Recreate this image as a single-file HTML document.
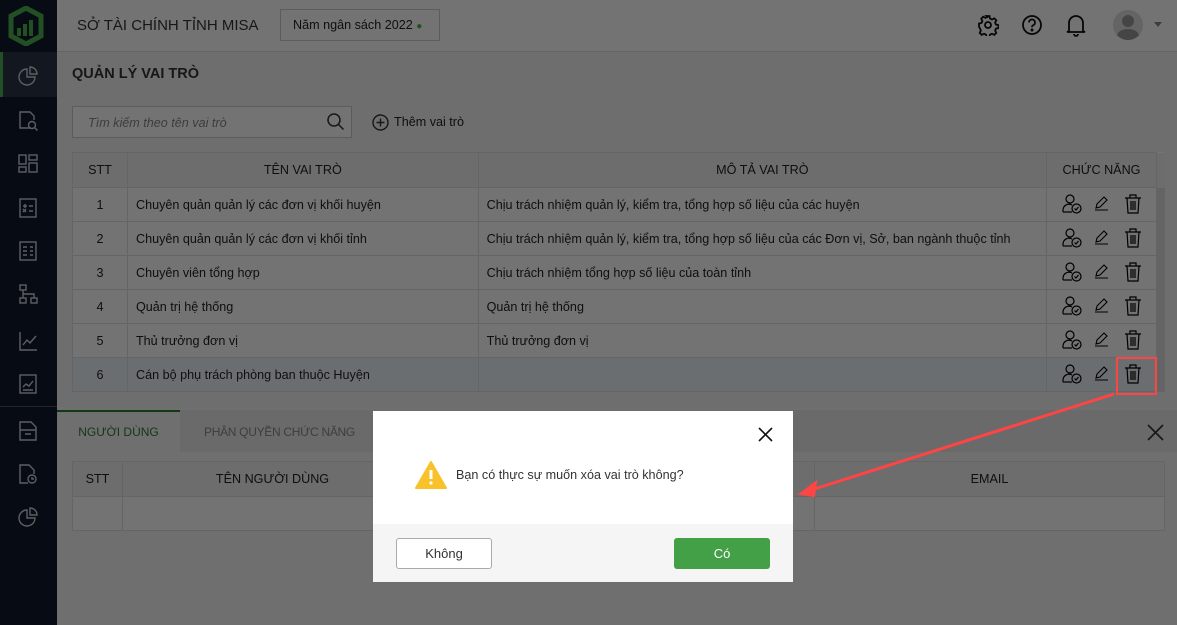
<!DOCTYPE html>
<html><head><meta charset="utf-8"><style>
*{box-sizing:border-box;margin:0;padding:0}
body{width:1177px;height:625px;overflow:hidden;font-family:"Liberation Sans",sans-serif;font-size:12.6px;color:#222;position:relative;background:#f3f3f3}
.side{position:absolute;left:0;top:0;width:57px;height:625px;background:#0f1a2e}
.side .act{position:absolute;left:0;top:52px;width:57px;height:45px;background:#2b3648;border-left:3px solid #4caf50}
.ic{position:absolute;left:17px;width:22px;height:22px}
.top{position:absolute;left:57px;top:0;right:0;height:52px;background:#fff;border-bottom:1px solid #ddd}
.abs{position:absolute}
table{border-collapse:collapse;position:absolute;background:#fff}
td,th{border:1px solid #e0e0e0;height:34px;padding:0 8px;font-weight:normal;font-size:12.6px}
th{background:#f1f1f1;height:35px}
.ov{position:absolute;left:0;top:0;width:1177px;height:625px;background:rgba(0,0,0,.55)}
.dlg{position:absolute;left:373px;top:411px;width:420px;height:171px;background:#fff}
.btn{position:absolute;top:127px;width:96px;height:31px;border-radius:3px;font-size:13px;text-align:center;line-height:30px}
</style></head><body>
<div class="side">
<svg class="abs" style="left:8px;top:6px" width="36" height="40" viewBox="0 0 36 40"><path d="M18 2 L33 10 V30 L18 38 L3 30 V10 Z" fill="none" stroke="#4caf50" stroke-width="5"/><path d="M11 30V22M17 30V18M23 30V14" stroke="#4caf50" stroke-width="4"/></svg>
<div class="act"></div>
<svg class="ic" style="top:65px" viewBox="0 0 22 22" fill="none" stroke="#cfd3d8" stroke-width="1.4"><path d="M10 4a8 8 0 1 0 8 8h-8z"/><path d="M13 2a7 7 0 0 1 7 7h-7z"/></svg>
<svg class="ic" style="top:110px" viewBox="0 0 22 22" fill="none" stroke="#cfd3d8" stroke-width="1.4"><path d="M14 18H3V2h10l4 4v4"/><circle cx="15" cy="15" r="3.5"/><path d="M17.5 17.5l3 3"/></svg>
<svg class="ic" style="top:153px" viewBox="0 0 22 22" fill="none" stroke="#cfd3d8" stroke-width="1.4"><rect x="2" y="2" width="7" height="9"/><rect x="12" y="2" width="8" height="5"/><rect x="2" y="14" width="7" height="5"/><rect x="12" y="10" width="8" height="9"/></svg>
<svg class="ic" style="top:197px" viewBox="0 0 22 22" fill="none" stroke="#cfd3d8" stroke-width="1.4"><rect x="3" y="2" width="16" height="18"/><path d="M6 9h4M8 7v4M12 9h4M6 15l3-3M6 12l3 3M12 14h4"/></svg>
<svg class="ic" style="top:240px" viewBox="0 0 22 22" fill="none" stroke="#cfd3d8" stroke-width="1.4"><rect x="3" y="2" width="16" height="18"/><path d="M6 7h4M6 11h4M6 15h4M13 7h3M13 11h3M13 15h3"/></svg>
<svg class="ic" style="top:283px" viewBox="0 0 22 22" fill="none" stroke="#cfd3d8" stroke-width="1.4"><rect x="3" y="2" width="6" height="5"/><rect x="3" y="15" width="6" height="5"/><rect x="14" y="15" width="6" height="5"/><path d="M6 7v8M6 11h11v4"/></svg>
<svg class="ic" style="top:330px" viewBox="0 0 22 22" fill="none" stroke="#cfd3d8" stroke-width="1.4"><path d="M3 2v18h17"/><path d="M6 15l4-5 3 3 6-7"/></svg>
<svg class="ic" style="top:373px" viewBox="0 0 22 22" fill="none" stroke="#cfd3d8" stroke-width="1.4"><rect x="3" y="2" width="16" height="18"/><path d="M6 14l3-3 3 2 4-5M6 17h10"/></svg>
<div class="abs" style="left:0;top:406px;width:57px;height:1px;background:#555"></div>
<svg class="ic" style="top:420px" viewBox="0 0 22 22" fill="none" stroke="#cfd3d8" stroke-width="1.4"><path d="M3 2h11l5 5v13H3z"/><path d="M3 10h16M8 14h6"/></svg>
<svg class="ic" style="top:463px" viewBox="0 0 22 22" fill="none" stroke="#cfd3d8" stroke-width="1.4"><path d="M11 20H3V2h9l5 5v4"/><circle cx="15" cy="16" r="4"/><path d="M15 14v2h2"/></svg>
<svg class="ic" style="top:506px" viewBox="0 0 22 22" fill="none" stroke="#cfd3d8" stroke-width="1.4"><path d="M10 4a8 8 0 1 0 8 8h-8z"/><path d="M13 2a7 7 0 0 1 7 7h-7z"/></svg>
</div>
<div class="top">
<div class="abs" style="left:20px;top:17px;font-size:15px;color:#333">SỞ TÀI CHÍNH TỈNH MISA</div>
<div class="abs" style="left:223px;top:9px;width:160px;height:32px;border:1px solid #ccc;font-size:12.6px;line-height:30px;padding-left:12px">Năm ngân sách 2022 <span style="color:#4caf50;font-size:10px">●</span></div>
<svg class="abs" style="left:920px;top:14px" width="22" height="22" viewBox="0 0 22 22" fill="none" stroke="#111" stroke-width="1.8"><circle cx="11" cy="11" r="3"/><path d="M9.5 2h3l.5 2.5 2 1 2.3-1.2 2 2-1.2 2.3.9 2 2.5.5v3l-2.5.5-.9 2 1.2 2.3-2 2-2.3-1.2-2 .9-.5 2.5h-3l-.5-2.5-2-.9-2.3 1.2-2-2 1.2-2.3-.9-2L2 12.5v-3l2.5-.5.9-2-1.2-2.3 2-2 2.3 1.2 2-1z"/></svg>
<svg class="abs" style="left:964px;top:14px" width="22" height="22" viewBox="0 0 22 22" fill="none" stroke="#111" stroke-width="1.8"><circle cx="11" cy="11" r="9"/><path d="M8 8.5a3 3 0 1 1 4 2.8c-.8.4-1 1-1 2"/><circle cx="11" cy="16" r=".6" fill="#111"/></svg>
<svg class="abs" style="left:1008px;top:13px" width="22" height="24" viewBox="0 0 22 24" fill="none" stroke="#111" stroke-width="1.8"><path d="M4 18V10a7 7 0 0 1 14 0v8l2 1H2z"/><path d="M9 21a2 2 0 0 0 4 0"/></svg>
<div class="abs" style="left:1056px;top:10px;width:30px;height:30px;border-radius:50%;background:#ddd;overflow:hidden"><div class="abs" style="left:9px;top:5px;width:12px;height:12px;border-radius:50%;background:#999"></div><div class="abs" style="left:4px;top:19px;width:22px;height:14px;border-radius:50%;background:#999"></div></div>
<div class="abs" style="left:1097px;top:22px;border:4px solid transparent;border-top:5px solid #888"></div>
</div>
<div class="abs" style="left:72px;top:66px;font-size:14.5px;font-weight:bold;color:#333">QUẢN LÝ VAI TRÒ</div>
<div class="abs" style="left:72px;top:106px;width:280px;height:32px;border:1px solid #ccc;background:#fff;padding:9px 15px;font-style:italic;color:#888">Tìm kiếm theo tên vai trò</div>
<svg class="abs" style="left:326px;top:112px" width="20" height="20" viewBox="0 0 20 20" fill="none" stroke="#333" stroke-width="1.5"><circle cx="8" cy="8" r="6"/><path d="M12.5 12.5l5 5"/></svg>
<svg class="abs" style="left:372px;top:114px" width="17" height="17" viewBox="0 0 17 17" fill="none" stroke="#333" stroke-width="1.4"><circle cx="8.5" cy="8.5" r="7.5"/><path d="M8.5 4.5v8M4.5 8.5h8"/></svg>
<div class="abs" style="left:394px;top:115px">Thêm vai trò</div>
<table style="left:72px;top:152px;width:1093px">
<tr><th style="width:55px">STT</th><th style="width:351px">TÊN VAI TRÒ</th><th style="width:569px">MÔ TẢ VAI TRÒ</th><th style="width:110px">CHỨC NĂNG</th><th style="width:8px;padding:0;border:none;background:#f1f1f1"></th></tr>
<tr><td align="center">1</td><td>Chuyên quản quản lý các đơn vị khối huyện</td><td>Chịu trách nhiệm quản lý, kiểm tra, tổng hợp số liệu của các huyện</td><td></td><td style="padding:0;border:none;background:#ddd"></td></tr>
<tr><td align="center">2</td><td>Chuyên quản quản lý các đơn vị khối tỉnh</td><td>Chịu trách nhiệm quản lý, kiểm tra, tổng hợp số liệu của các Đơn vị, Sở, ban ngành thuộc tỉnh</td><td></td><td style="padding:0;border:none;background:#ddd"></td></tr>
<tr><td align="center">3</td><td>Chuyên viên tổng hợp</td><td>Chịu trách nhiệm tổng hợp số liệu của toàn tỉnh</td><td></td><td style="padding:0;border:none;background:#ddd"></td></tr>
<tr><td align="center">4</td><td>Quản trị hệ thống</td><td>Quản trị hệ thống</td><td></td><td style="padding:0;border:none;background:#ddd"></td></tr>
<tr><td align="center">5</td><td>Thủ trưởng đơn vị</td><td>Thủ trưởng đơn vị</td><td></td><td style="padding:0;border:none;background:#ddd"></td></tr>
<tr style="background:#eef3f8"><td align="center">6</td><td>Cán bộ phụ trách phòng ban thuộc Huyện</td><td></td><td></td><td style="padding:0;border:none;background:#ddd"></td></tr>
</table>
<div id="icons"></div>
<div class="abs" style="left:57px;top:407px;width:1120px;height:218px;background:#f7f7f7"></div>
<div class="abs" style="left:57px;top:410px;width:1120px;height:42px;background:#ececec"></div>
<div class="abs" style="left:57px;top:410px;width:123px;height:42px;background:#f7f7f7;border-top:2px solid #2e7d32;color:#2e7d32;text-align:center;line-height:40px;font-size:12px">NGƯỜI DÙNG</div>
<div class="abs" style="left:204px;top:425px;color:#888;font-size:12px;letter-spacing:-.3px">PHÂN QUYỀN CHỨC NĂNG</div>
<svg class="abs" style="left:1147px;top:424px" width="17" height="17" viewBox="0 0 17 17" stroke="#333" stroke-width="1.6"><path d="M1 1l15 15M16 1L1 16"/></svg>
<table style="left:72px;top:461px;width:1093px">
<tr><th style="width:50px">STT</th><th style="width:300px">TÊN NGƯỜI DÙNG</th><th></th><th style="width:350px">EMAIL</th></tr>
<tr><td></td><td></td><td></td><td></td></tr>
</table>
<div class="ov"></div>
<div class="dlg">
<svg class="abs" style="left:385px;top:16px" width="15" height="15" viewBox="0 0 15 15" stroke="#111" stroke-width="1.6"><path d="M1 1l13 13M14 1L1 14"/></svg>
<svg class="abs" style="left:42px;top:50px" width="32" height="28" viewBox="0 0 32 28"><path d="M16 1L31 27H1z" fill="#f9c22b" stroke="#f9c22b" stroke-linejoin="round" stroke-width="2"/><path d="M16 9v9" stroke="#fff" stroke-width="3"/><circle cx="16" cy="22" r="1.6" fill="#fff"/></svg>
<div class="abs" style="left:83px;top:57px;color:#333">Bạn có thực sự muốn xóa vai trò không?</div>
<div class="abs" style="left:0;top:113px;width:420px;height:58px;background:#f5f5f5"></div>
<div class="btn" style="left:23px;border:1px solid #aaa;background:#fff;color:#333">Không</div>
<div class="btn" style="left:301px;background:#43a047;color:#fff;line-height:31px">Có</div>
</div>
<div class="abs" style="left:1116px;top:357px;width:41px;height:38px;border:2px solid #f44"></div>
<svg class="abs" style="left:0;top:0" width="1177" height="625"><path d="M1114 394L808 491" stroke="#f44" stroke-width="3"/><path d="M800 494l16-12-2 14z" fill="#f44" stroke="#f44" stroke-width="2"/></svg>
<script>
var h='';
var ys=[204,238,272,306,340,374];
ys.forEach(function(y){
h+='<svg class="abs" style="left:1061px;top:'+(y-11)+'px" width="22" height="22" viewBox="0 0 22 22" fill="none" stroke="#000" stroke-width="1.2"><circle cx="9" cy="6" r="4"/><path d="M2 19v-2a6 6 0 0 1 9-5"/><path d="M2 19h9"/><circle cx="15.5" cy="15.5" r="4.5"/><path d="M13.5 15.5l1.5 1.5 2.5-3"/></svg>';
h+='<svg class="abs" style="left:1094px;top:'+(y-9)+'px" width="16" height="16" viewBox="0 0 16 16" fill="none" stroke="#000" stroke-width="1.1"><path d="M2 13l1-4 7-7 3 3-7 7zM1 15h13"/></svg>';
h+='<svg class="abs" style="left:1124px;top:'+(y-10)+'px" width="18" height="20" viewBox="0 0 18 20" fill="none" stroke="#000" stroke-width="1.2"><path d="M1 4h16M6 4V1h6v3M3 4l1 15h10l1-15M7 7v9M9 7v9M11 7v9"/></svg>';
});
document.getElementById('icons').innerHTML=h;
</script>
</body></html>
